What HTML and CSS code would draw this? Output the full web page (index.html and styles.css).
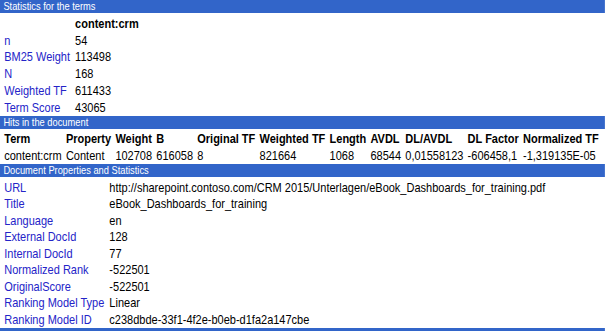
FILE: index.html
```html
<!DOCTYPE html>
<html lang="en">
<head>
    <meta charset="UTF-8">
    <meta name="viewport" content="width=device-width, initial-scale=1.0">
    <title>Ranking Explanation</title>
    <link rel="stylesheet" href="styles.css">
</head>
<body>
    <div class="page">
        <div class="section-bar">Statistics for the terms</div>
        <table class="props terms">
            <tr>
                <th class="label"></th>
                <th>content:crm</th>
            </tr>
            <tr><td class="label">n</td><td>54</td></tr>
            <tr><td class="label">BM25 Weight</td><td>113498</td></tr>
            <tr><td class="label">N</td><td>168</td></tr>
            <tr><td class="label">Weighted TF</td><td>611433</td></tr>
            <tr><td class="label">Term Score</td><td>43065</td></tr>
        </table>

        <div class="section-bar">Hits in the document</div>
        <table class="hits">
            <tr>
                <th>Term</th>
                <th>Property</th>
                <th>Weight</th>
                <th>B</th>
                <th>Original TF</th>
                <th>Weighted TF</th>
                <th>Length</th>
                <th>AVDL</th>
                <th>DL/AVDL</th>
                <th>DL Factor</th>
                <th>Normalized TF</th>
            </tr>
            <tr>
                <td>content:crm</td>
                <td>Content</td>
                <td>102708</td>
                <td>616058</td>
                <td>8</td>
                <td>821664</td>
                <td>1068</td>
                <td>68544</td>
                <td>0,01558123</td>
                <td>-606458,1</td>
                <td>-1,319135E-05</td>
            </tr>
        </table>

        <div class="section-bar">Document Properties and Statistics</div>
        <table class="props doc">
            <tr><td class="label">URL</td><td>http://sharepoint.contoso.com/CRM 2015/Unterlagen/eBook_Dashboards_for_training.pdf</td></tr>
            <tr><td class="label">Title</td><td>eBook_Dashboards_for_training</td></tr>
            <tr><td class="label">Language</td><td>en</td></tr>
            <tr><td class="label">External DocId</td><td>128</td></tr>
            <tr><td class="label">Internal DocId</td><td>77</td></tr>
            <tr><td class="label">Normalized Rank</td><td>-522501</td></tr>
            <tr><td class="label">OriginalScore</td><td>-522501</td></tr>
            <tr><td class="label">Ranking Model Type</td><td>Linear</td></tr>
            <tr><td class="label">Ranking Model ID</td><td>c238dbde-33f1-4f2e-b0eb-d1fa2a147cbe</td></tr>
        </table>
        <div class="section-bar end"></div>
    </div>
</body>
</html>
```

FILE: styles.css
```css
body {
    font-family: 'Liberation Sans', Arial, sans-serif;
    font-size: 13px;
    color: #000;
    background-color: #fff;
    margin: 0;
    overflow: hidden;
}
.page {
    width: 715px;
    transform: scaleX(0.846);
    transform-origin: 0 0;
}
.section-bar {
    background-color: #3265c9;
    color: #fff;
    font-size: 11px;
    height: 13px;
    line-height: 13px;
    padding-left: 4px;
    white-space: nowrap;
}
.section-bar.end {
    height: 3px;
}
table {
    border-collapse: collapse;
    border-spacing: 0;
    margin-top: 2px;
}
th, td {
    padding: 0 1px 0 5px;
    height: 16.75px;
    line-height: 15px;
    text-align: left;
    white-space: nowrap;
    vertical-align: middle;
}
th {
    font-weight: bold;
}
.props .label {
    color: #2424c8;
}
.doc td {
    height: 16.5px;
}
.hits {
    margin-left: 1px;
}
.hits th, .hits td {
    padding: 0 1px 0 4px;
}
```
